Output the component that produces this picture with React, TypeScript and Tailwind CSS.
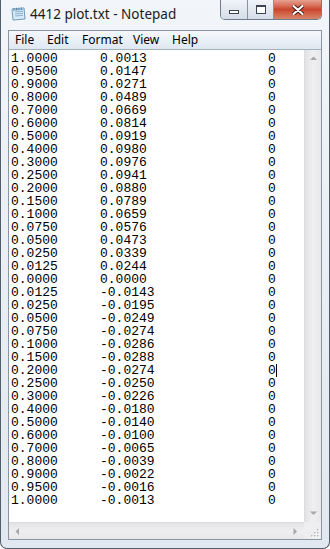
const rows: [string, string][] = [
  ["1.0000", "0.0013"],
  ["0.9500", "0.0147"],
  ["0.9000", "0.0271"],
  ["0.8000", "0.0489"],
  ["0.7000", "0.0669"],
  ["0.6000", "0.0814"],
  ["0.5000", "0.0919"],
  ["0.4000", "0.0980"],
  ["0.3000", "0.0976"],
  ["0.2500", "0.0941"],
  ["0.2000", "0.0880"],
  ["0.1500", "0.0789"],
  ["0.1000", "0.0659"],
  ["0.0750", "0.0576"],
  ["0.0500", "0.0473"],
  ["0.0250", "0.0339"],
  ["0.0125", "0.0244"],
  ["0.0000", "0.0000"],
  ["0.0125", "-0.0143"],
  ["0.0250", "-0.0195"],
  ["0.0500", "-0.0249"],
  ["0.0750", "-0.0274"],
  ["0.1000", "-0.0286"],
  ["0.1500", "-0.0288"],
  ["0.2000", "-0.0274"],
  ["0.2500", "-0.0250"],
  ["0.3000", "-0.0226"],
  ["0.4000", "-0.0180"],
  ["0.5000", "-0.0140"],
  ["0.6000", "-0.0100"],
  ["0.7000", "-0.0065"],
  ["0.8000", "-0.0039"],
  ["0.9000", "-0.0022"],
  ["0.9500", "-0.0016"],
  ["1.0000", "-0.0013"],
];

// caret sits after the 0 on "0.2000 -0.0274"
const CARET_ROW = 24;

function NotepadIcon() {
  return (
    <svg width="16" height="14" viewBox="0 0 16 14">
      <path d="M2 2 L14 1 L15 12 L3 13 Z" fill="#d7ecf8" stroke="#6f9ab8" strokeWidth="1" />
      <path d="M5 5 L13 4.4 M5 7 L13 6.4 M5 9 L13 8.4" stroke="#8fb2cc" strokeWidth="1" />
      <path d="M2 2 L14 1 L14.2 3 L2.2 4 Z" fill="#9cc3de" />
      <path d="M4 1 v2.5 M6.5 0.8 v2.5 M9 0.6 v2.5 M11.5 0.4 v2.5" stroke="#5c7f99" strokeWidth="0.9" />
    </svg>
  );
}

function CaptionButtons() {
  return (
    <div className="flex h-[20px] mr-[7px] rounded-b-[5px] border border-t-0 border-[#6f7d8d] overflow-hidden">
      <div className="w-[27px] h-full flex items-end justify-center pb-[5px] bg-gradient-to-b from-[#f1f4f8] to-[#d5dde7] border-r border-[#8794a3]">
        <div className="w-[10px] h-[4px] border border-[#3b4552] bg-white" />
      </div>
      <div className="w-[26px] h-full flex items-center justify-center bg-gradient-to-b from-[#f1f4f8] to-[#d5dde7] border-r border-[#8794a3]">
        <div className="w-[10px] h-[9px] border border-t-2 border-[#3b4552] bg-white" />
      </div>
      <div className="w-[47px] h-full flex items-center justify-center bg-gradient-to-b from-[#e6a191] via-[#c9462e] to-[#d8846a]">
        <svg width="12" height="10" viewBox="0 0 12 10">
          <path d="M1.5 1 L10.5 9 M10.5 1 L1.5 9" stroke="#4a1c14" strokeWidth="4" strokeLinecap="round" />
          <path d="M1.5 1 L10.5 9 M10.5 1 L1.5 9" stroke="#ffffff" strokeWidth="2.2" strokeLinecap="round" />
        </svg>
      </div>
    </div>
  );
}

function Arrow({ dir }: { dir: "up" | "down" | "left" | "right" }) {
  const d = {
    up: "M0 4 L3.5 0.5 L7 4 Z",
    down: "M0 0.5 L3.5 4 L7 0.5 Z",
    left: "M4 0 L0.5 3.5 L4 7 Z",
    right: "M0.5 0 L4 3.5 L0.5 7 Z",
  }[dir];
  const vertical = dir === "up" || dir === "down";
  return (
    <svg width={vertical ? 7 : 5} height={vertical ? 5 : 7} viewBox={vertical ? "0 0 7 5" : "0 0 5 7"}>
      <path d={d} fill="#a8a8a8" />
    </svg>
  );
}

function Grip() {
  const dots = [
    [9, 3],
    [6, 6],
    [9, 6],
    [3, 9],
    [6, 9],
    [9, 9],
  ];
  return (
    <svg width="12" height="12" viewBox="0 0 12 12">
      {dots.map(([x, y], i) => (
        <g key={i}>
          <rect x={x + 1} y={y + 1} width="1.5" height="1.5" fill="#ffffff" />
          <rect x={x} y={y} width="1.5" height="1.5" fill="#b5b9bf" />
        </g>
      ))}
    </svg>
  );
}

export default function App() {
  const mono = { fontFamily: '"Liberation Mono", "DejaVu Sans Mono", monospace' };
  const ui = { fontFamily: '"Noto Sans", "Open Sans", sans-serif' };
  return (
    <div className="w-[330px] h-[549px] bg-white overflow-hidden">
      <div className="w-[330px] h-[549px] flex flex-col border border-t-0 border-[#525e6c] rounded-b-[7px] bg-gradient-to-b from-[#f2f5f9] to-[#e2e8ef]">
        {/* title bar */}
        <div className="h-[30px] flex items-start shrink-0">
          <div className="flex items-center h-[30px] pl-[9px] gap-[4px] flex-1 pb-[2px]">
            <NotepadIcon />
            <span className="text-[13.5px] text-[#1b1b1b]" style={ui}>
              4412 plot.txt - Notepad
            </span>
          </div>
          <CaptionButtons />
        </div>

        {/* client area */}
        <div className="flex-1 flex flex-col px-[7px] pb-[8px] min-h-0">
          <div className="flex-1 flex flex-col border border-[#8a96a4] min-h-0 bg-white">
            <div
              className="h-[19px] flex items-center pl-[6px] text-[12px] text-black bg-gradient-to-b from-[#f6f8fb] via-[#eaf0f7] to-[#dfe7f1] border-b border-[#a4b0be] shrink-0"
              style={ui}
            >
              <span className="w-[32px]">File</span>
              <span className="w-[35px]">Edit</span>
              <span className="w-[51px]">Format</span>
              <span className="w-[39px]">View</span>
              <span>Help</span>
            </div>

            <div className="flex-1 grid grid-cols-[1fr_17px] grid-rows-[1fr_17px] min-h-0">
              <div className="pt-[2px] pl-[2px] text-[13px] leading-[13px] text-black overflow-hidden" style={mono}>
                {rows.map(([a, b], i) => (
                  <div key={i} className="flex h-[13px] whitespace-pre">
                    <span className="w-[89px]">{a}</span>
                    <span className="w-[168px]">{b}</span>
                    <span className="relative">
                      0
                      {i === CARET_ROW && (
                        <span className="absolute left-[8px] top-0 w-[1px] h-[13px] bg-black" />
                      )}
                    </span>
                  </div>
                ))}
              </div>

              <div className="flex flex-col items-center justify-between py-[6px] bg-gradient-to-r from-[#e3e3e6] via-[#efeff1] to-[#e8e8eb] border-l border-[#dcdce0]">
                <Arrow dir="up" />
                <Arrow dir="down" />
              </div>

              <div className="flex items-center justify-between px-[6px] bg-gradient-to-b from-[#e3e3e6] via-[#efeff1] to-[#e8e8eb] border-t border-[#dcdce0]">
                <Arrow dir="left" />
                <Arrow dir="right" />
              </div>

              <div className="flex items-end justify-end bg-[#eeeef0] pr-[1px] pb-[1px]">
                <Grip />
              </div>
            </div>
          </div>
        </div>
      </div>
    </div>
  );
}
